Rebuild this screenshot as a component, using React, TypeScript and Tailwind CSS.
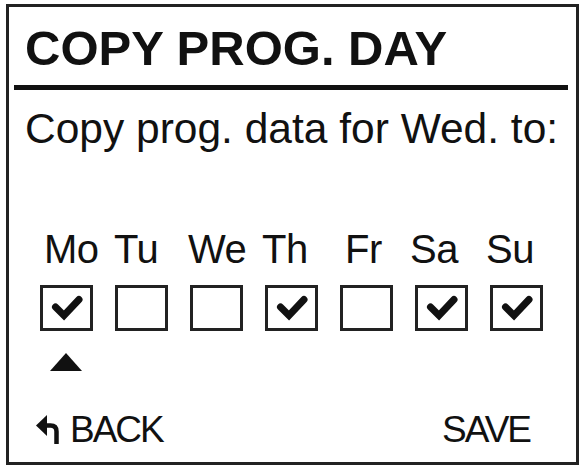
import React from "react"

const days = [
  { label: "Mo", on: true, shift: "ml-[4px]" },
  { label: "Tu", on: false, shift: "ml-[-1px]" },
  { label: "We", on: false, shift: "ml-[-2px]" },
  { label: "Th", on: true, shift: "ml-[-3px]" },
  { label: "Fr", on: false, shift: "ml-[5px]" },
  { label: "Sa", on: true, shift: "ml-[-5px]" },
  { label: "Su", on: true, shift: "ml-[-4px]" },
]

function Check() {
  return (
    <svg width="47" height="40" viewBox="0 0 47 40" className="block">
      <polyline points="12.5,19 21,27.5 36,11.5" fill="none" stroke="#111" strokeWidth="7" strokeLinecap="round" strokeLinejoin="miter" />
    </svg>
  )
}

function BackArrow() {
  return (
    <svg width="25" height="29" viewBox="0 0 25 29" className="block">
      <polygon points="0,10.5 11,0 11,21" fill="#111" />
      <path d="M9 10.5 H14.5 Q20.5 10.5 20.5 16.5 V29" fill="none" stroke="#111" strokeWidth="4.5" />
    </svg>
  )
}

export default function App() {
  return (
    <div className="w-[586px] h-[472px] bg-white pt-[4px] pl-[6px] font-['Liberation_Sans',Arial,sans-serif] text-[#111]">
      <div className="w-[573px] h-[461px] border-[3px] border-[#222] flex flex-col">
        {/* title */}
        <div className="mt-[17px] pl-[16px] text-[49px] leading-none font-bold">COPY PROG. DAY</div>
        <div className="mt-[12px] ml-[5px] mr-[8px] h-[5px] bg-[#111]" />

        <div className="mt-[18px] pl-[16px] text-[42.5px] leading-none">Copy prog. data for Wed. to:</div>

        {/* day labels */}
        <div className="mt-[78px] pl-[31px] grid grid-cols-[repeat(7,75px)] text-[40px] leading-none tracking-[-0.5px]">
          {days.map((d) => (
            <span key={d.label} className={d.shift}>{d.label}</span>
          ))}
        </div>

        {/* checkboxes */}
        <div className="mt-[16px] pl-[31px] grid grid-cols-[repeat(7,75px)]">
          {days.map((d) => (
            <div key={d.label} className="w-[53px] h-[46px] border-[3px] border-[#222]">
              {d.on && <Check />}
            </div>
          ))}
        </div>

        {/* cursor */}
        <div className="mt-[22px] ml-[41px] w-0 h-0 border-l-[16px] border-r-[16px] border-b-[18px] border-l-transparent border-r-transparent border-b-[#111]" />

        {/* footer */}
        <div className="mt-[40px] pl-[27px] pr-[46px] flex items-center justify-between text-[37px] leading-none tracking-[-2px]">
          <div className="flex items-center">
            <BackArrow />
            <span className="ml-[9px]">BACK</span>
          </div>
          <span>SAVE</span>
        </div>
      </div>
    </div>
  )
}
